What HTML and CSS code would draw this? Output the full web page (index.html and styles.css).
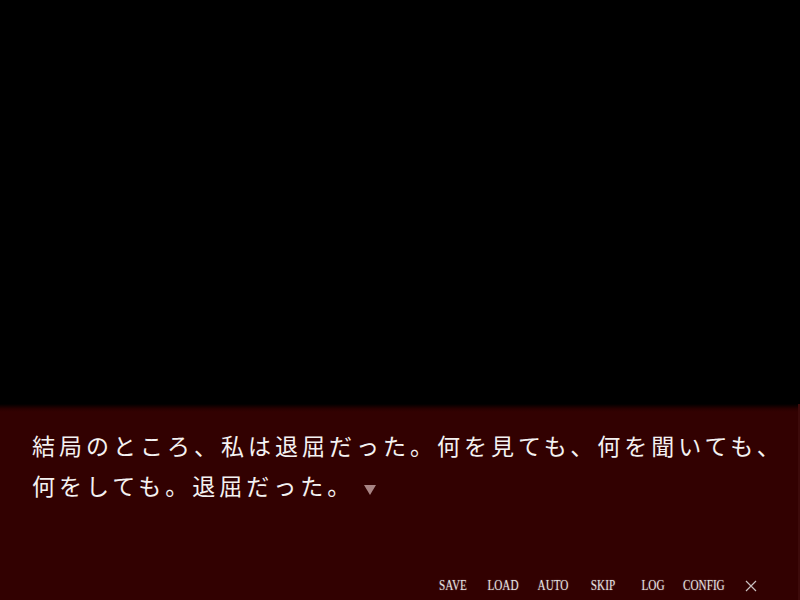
FILE: index.html
```html
<!DOCTYPE html>
<html lang="ja">
<head>
<meta charset="utf-8">
<link rel="stylesheet" href="styles.css">
</head>
<body>
<div class="screen">
  <div class="stage"></div>
  <div class="msgbox">
    <p class="msg">結局のところ、私は退屈だった。何を見ても、何を聞いても、<br>何をしても。退屈だった。<span class="wait"></span></p>
    <nav class="menu">
      <span class="item">SAVE</span>
      <span class="item">LOAD</span>
      <span class="item">AUTO</span>
      <span class="item">SKIP</span>
      <span class="item">LOG</span>
      <span class="item">CONFIG</span>
      <span class="item close"><svg width="12" height="12" viewBox="0 0 12 12"><path d="M1 1L11 11M11 1L1 11" stroke="#c8c0c0" stroke-width="1.2" fill="none"/></svg></span>
    </nav>
  </div>
</div>
</body>
</html>
```
FILE: styles.css
```css
html, body {
  margin: 0;
  padding: 0;
  background: #000;
}
.screen {
  width: 800px;
  height: 600px;
  display: flex;
  flex-direction: column;
  overflow: hidden;
}
.stage {
  height: 404px;
  background: #000;
}
.msgbox {
  flex: 1;
  display: flex;
  flex-direction: column;
  background: linear-gradient(to bottom, #000 0px, #2a0000 5px, #320101 8px, #320101 100%);
  box-shadow: inset -2px 0 0 #3c0a0a;
}
.msg {
  margin: 0;
  padding: 21px 0 0 32px;
  font-family: "Noto Sans CJK JP", "Noto Sans", sans-serif;
  font-size: 23px;
  font-weight: 400;
  line-height: 40px;
  letter-spacing: 4px;
  color: #f4f2f2;
}
.wait {
  display: inline-block;
  width: 0;
  height: 0;
  margin-left: 10px;
  border-left: 6px solid transparent;
  border-right: 6px solid transparent;
  border-top: 10px solid #a88484;
  vertical-align: 0px;
}
.menu {
  margin-top: auto;
  display: flex;
  justify-content: flex-end;
  padding: 0 26px 5px 0;
  height: 18px;
  align-items: center;
}
.item {
  width: 50px;
  text-align: center;
  font-family: "Liberation Serif", "Times New Roman", serif;
  font-size: 14px;
  color: #e6e2e2;
  text-shadow: 0 0 2px rgba(255,255,255,0.3);
  transform: scaleX(0.8);
}
.item.close {
  width: 46px;
  transform: none;
  display: flex;
  justify-content: center;
}
```
